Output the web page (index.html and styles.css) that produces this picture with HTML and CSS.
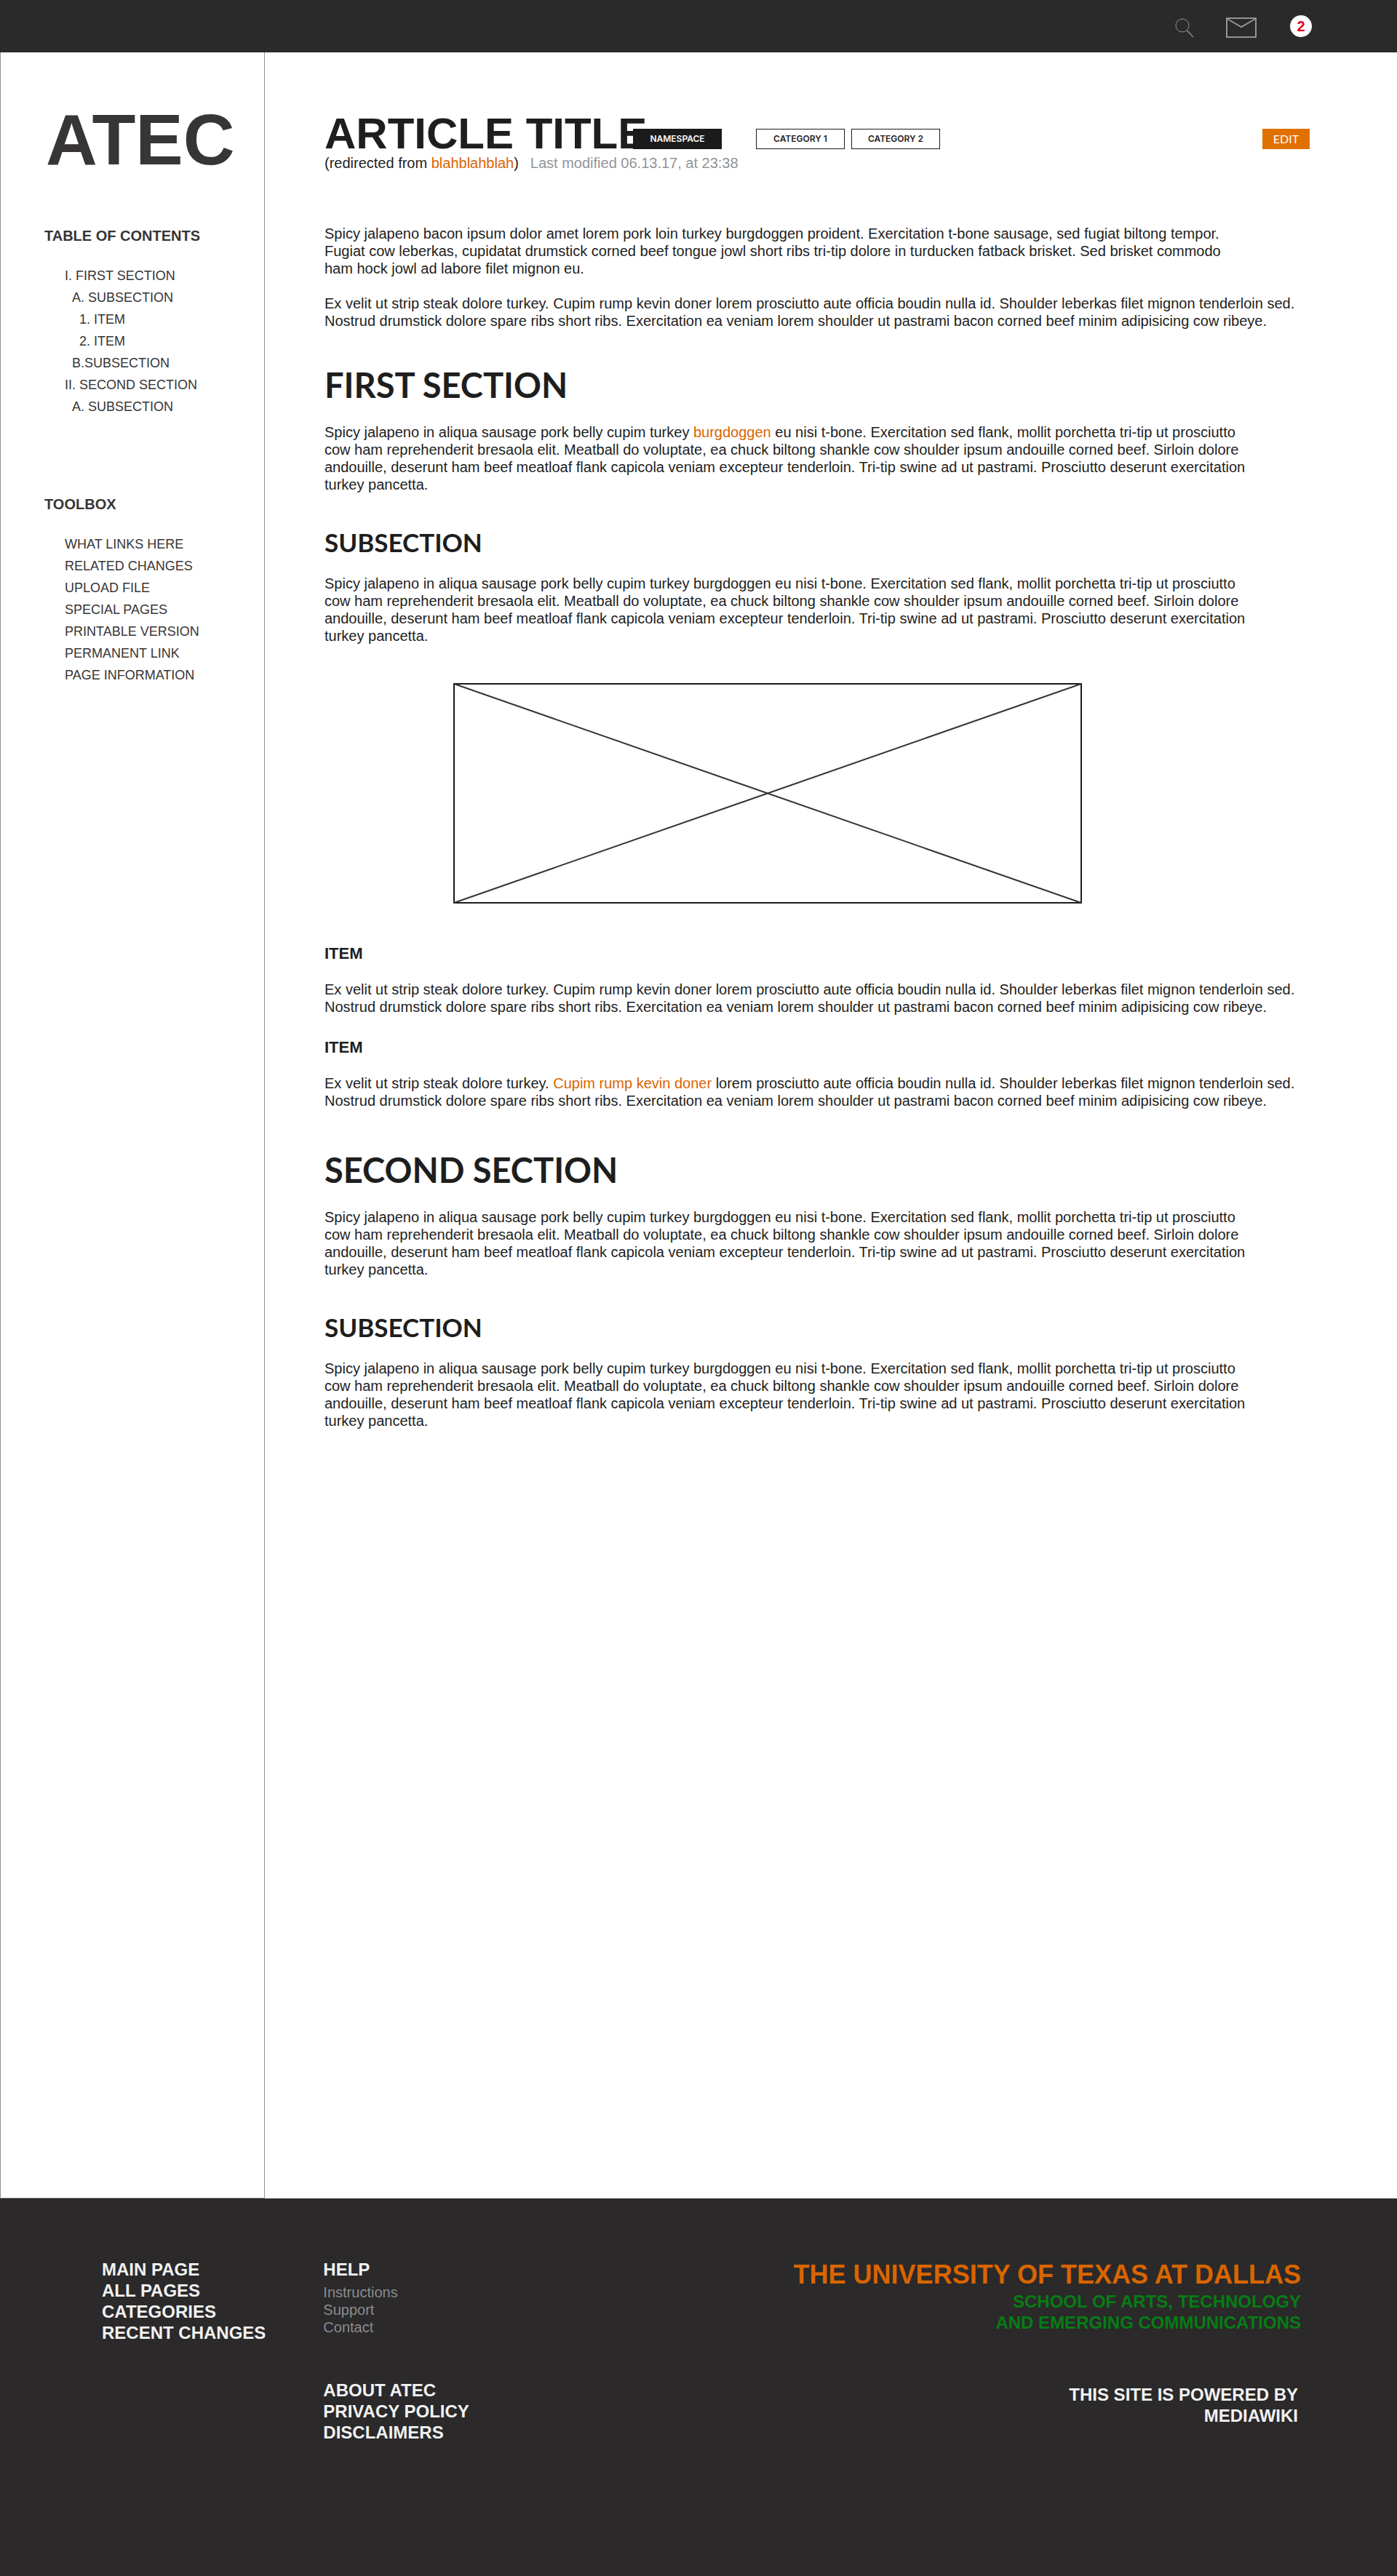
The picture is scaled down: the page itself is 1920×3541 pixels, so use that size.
FILE: index.html
```html
<!DOCTYPE html>
<html lang="en">
<head>
<meta charset="utf-8">
<title>Article Title - ATEC</title>
<meta name="viewport" content="width=device-width, initial-scale=1">
<link rel="stylesheet" href="styles.css">
</head>
<body>
<header class="topbar">
  <button class="icon-button" type="button" aria-label="Search">
    <svg class="icon-search" width="26" height="27" viewBox="0 0 26 27" fill="none" stroke="#8f9194" stroke-width="1"><circle cx="10" cy="10" r="9"/><path d="M16 16.500 25 26" stroke-width="1.400"/></svg>
  </button>
  <a class="icon-link" href="#" aria-label="Messages">
    <svg width="42" height="28" viewBox="0 0 42 28" fill="none" stroke="#929497" stroke-width="2"><path d="M1 1h40v26H1z"/><path d="M1 1.500 21 13 41 1.500"/></svg>
  </a>
  <a class="count" href="#">2</a>
</header>

<div class="page">
  <aside class="sidebar">
    <a class="logo" href="#">ATEC</a>
    <nav class="menu">
      <h2 class="menu-title">TABLE OF CONTENTS</h2>
      <ul class="menu-list">
        <li><a href="#first">I. FIRST SECTION</a></li>
        <li class="level-2"><a href="#first-sub">A. SUBSECTION</a></li>
        <li class="level-3"><a href="#item-1">1. ITEM</a></li>
        <li class="level-3"><a href="#item-2">2. ITEM</a></li>
        <li class="level-2"><a href="#first-sub">B.SUBSECTION</a></li>
        <li><a href="#second">II. SECOND SECTION</a></li>
        <li class="level-2"><a href="#second-sub">A. SUBSECTION</a></li>
      </ul>
    </nav>
    <nav class="menu toolbox">
      <h2 class="menu-title">TOOLBOX</h2>
      <ul class="menu-list">
        <li><a href="#">WHAT LINKS HERE</a></li>
        <li><a href="#">RELATED CHANGES</a></li>
        <li><a href="#">UPLOAD FILE</a></li>
        <li><a href="#">SPECIAL PAGES</a></li>
        <li><a href="#">PRINTABLE VERSION</a></li>
        <li><a href="#">PERMANENT LINK</a></li>
        <li><a href="#">PAGE INFORMATION</a></li>
      </ul>
    </nav>
  </aside>

  <main class="article">
    <div class="title-row">
      <h1 class="title">ARTICLE TITLE</h1>
      <a class="tag tag-namespace" href="#">NAMESPACE</a>
      <a class="tag" href="#">CATEGORY 1</a>
      <a class="tag" href="#">CATEGORY 2</a>
      <button class="edit" type="button">EDIT</button>
    </div>
    <div class="meta">
      <span>(redirected from <a href="#">blahblahblah</a>)</span>
      <span class="modified">Last modified 06.13.17, at 23:38</span>
    </div>

    <section class="intro">
      <p>Spicy jalapeno bacon ipsum dolor amet lorem pork loin turkey burgdoggen proident. Exercitation t-bone sausage, sed fugiat biltong tempor. Fugiat cow leberkas, cupidatat drumstick corned beef tongue jowl short ribs tri-tip dolore in turducken fatback brisket. Sed brisket commodo ham hock jowl ad labore filet mignon eu.</p>
      <p class="wide">Ex velit ut strip steak dolore turkey. Cupim rump kevin doner lorem prosciutto aute officia boudin nulla id. Shoulder leberkas filet mignon tenderloin sed. Nostrud drumstick dolore spare ribs short ribs. Exercitation ea veniam lorem shoulder ut pastrami bacon corned beef minim adipisicing cow ribeye.</p>
    </section>

    <section class="section">
      <h2 id="first">FIRST SECTION</h2>
      <p>Spicy jalapeno in aliqua sausage pork belly cupim turkey <a href="#">burgdoggen</a> eu nisi t-bone. Exercitation sed flank, mollit porchetta tri-tip ut prosciutto cow ham reprehenderit bresaola elit. Meatball do voluptate, ea chuck biltong shankle cow shoulder ipsum andouille corned beef. Sirloin dolore andouille, deserunt ham beef meatloaf flank capicola veniam excepteur tenderloin. Tri-tip swine ad ut pastrami. Prosciutto deserunt exercitation turkey pancetta.</p>
      <h3 id="first-sub">SUBSECTION</h3>
      <p>Spicy jalapeno in aliqua sausage pork belly cupim turkey burgdoggen eu nisi t-bone. Exercitation sed flank, mollit porchetta tri-tip ut prosciutto cow ham reprehenderit bresaola elit. Meatball do voluptate, ea chuck biltong shankle cow shoulder ipsum andouille corned beef. Sirloin dolore andouille, deserunt ham beef meatloaf flank capicola veniam excepteur tenderloin. Tri-tip swine ad ut pastrami. Prosciutto deserunt exercitation turkey pancetta.</p>
      <figure class="figure">
        <svg class="placeholder" viewBox="0 0 864 303" fill="none" role="img" aria-label="Image placeholder"><path d="M1 1h862v301H1z" stroke="#1b1b1b" stroke-width="2"/><path d="M1 1 863 302M1 302 863 1" stroke="#373536" stroke-width="2"/></svg>
      </figure>
      <h4 id="item-1">ITEM</h4>
      <p class="wide">Ex velit ut strip steak dolore turkey. Cupim rump kevin doner lorem prosciutto aute officia boudin nulla id. Shoulder leberkas filet mignon tenderloin sed. Nostrud drumstick dolore spare ribs short ribs. Exercitation ea veniam lorem shoulder ut pastrami bacon corned beef minim adipisicing cow ribeye.</p>
      <h4 id="item-2">ITEM</h4>
      <p class="wide">Ex velit ut strip steak dolore turkey. <a href="#">Cupim rump kevin doner</a> lorem prosciutto aute officia boudin nulla id. Shoulder leberkas filet mignon tenderloin sed. Nostrud drumstick dolore spare ribs short ribs. Exercitation ea veniam lorem shoulder ut pastrami bacon corned beef minim adipisicing cow ribeye.</p>
    </section>

    <section class="section">
      <h2 id="second">SECOND SECTION</h2>
      <p>Spicy jalapeno in aliqua sausage pork belly cupim turkey burgdoggen eu nisi t-bone. Exercitation sed flank, mollit porchetta tri-tip ut prosciutto cow ham reprehenderit bresaola elit. Meatball do voluptate, ea chuck biltong shankle cow shoulder ipsum andouille corned beef. Sirloin dolore andouille, deserunt ham beef meatloaf flank capicola veniam excepteur tenderloin. Tri-tip swine ad ut pastrami. Prosciutto deserunt exercitation turkey pancetta.</p>
      <h3 id="second-sub">SUBSECTION</h3>
      <p>Spicy jalapeno in aliqua sausage pork belly cupim turkey burgdoggen eu nisi t-bone. Exercitation sed flank, mollit porchetta tri-tip ut prosciutto cow ham reprehenderit bresaola elit. Meatball do voluptate, ea chuck biltong shankle cow shoulder ipsum andouille corned beef. Sirloin dolore andouille, deserunt ham beef meatloaf flank capicola veniam excepteur tenderloin. Tri-tip swine ad ut pastrami. Prosciutto deserunt exercitation turkey pancetta.</p>
    </section>
  </main>
</div>

<footer class="footer">
  <ul class="footer-links">
    <li><a href="#">MAIN PAGE</a></li>
    <li><a href="#">ALL PAGES</a></li>
    <li><a href="#">CATEGORIES</a></li>
    <li><a href="#">RECENT CHANGES</a></li>
  </ul>
  <div class="footer-middle">
    <ul class="footer-links">
      <li><a href="#">HELP</a>
        <ul class="help-links">
          <li><a href="#">Instructions</a></li>
          <li><a href="#">Support</a></li>
          <li><a href="#">Contact</a></li>
        </ul>
      </li>
    </ul>
    <ul class="footer-links">
      <li><a href="#">ABOUT ATEC</a></li>
      <li><a href="#">PRIVACY POLICY</a></li>
      <li><a href="#">DISCLAIMERS</a></li>
    </ul>
  </div>
  <div class="credits">
    <p class="university">THE UNIVERSITY OF TEXAS AT DALLAS</p>
    <p class="school">SCHOOL OF ARTS, TECHNOLOGY<br>AND EMERGING COMMUNICATIONS</p>
    <p class="powered">THIS SITE IS POWERED BY<br>MEDIAWIKI</p>
  </div>
</footer>
</body>
</html>
```

FILE: styles.css
```css
* {
  box-sizing: border-box;
}

body {
  margin: 0;
  min-height: 100vh;
  display: flex;
  flex-direction: column;
  background: #fff;
  color: #1e1e1e;
  font: 20px/24px "Liberation Sans", Arial, sans-serif;
}

h1, h2, h3, h4, p, ul, figure {
  margin: 0;
}

ul {
  padding: 0;
  list-style: none;
}

a {
  color: inherit;
  text-decoration: none;
}

button {
  border: 0;
  padding: 0;
  background: none;
  font: inherit;
  cursor: pointer;
}

svg {
  display: block;
}

/* Top bar */

.topbar {
  display: flex;
  justify-content: flex-end;
  align-items: center;
  height: 72px;
  padding-right: 117px;
  background: #2a2a2a;
}

.icon-button {
  margin-right: 44px;
  padding-top: 5px;
}

.icon-link {
  margin-right: 46px;
  padding-top: 4px;
}

.count {
  width: 30px;
  height: 30px;
  border-radius: 50%;
  background: #fff;
  color: #e9001b;
  font-weight: bold;
  line-height: 30px;
  text-align: center;
}

/* Page */

.page {
  flex: 1;
  display: flex;
}

.sidebar {
  flex: 0 0 364px;
  padding: 80px 20px 60px 60px;
  border: 1px solid #929497;
  border-top: 0;
  color: #373536;
}

.logo {
  display: block;
  padding-left: 2px;
  font-size: 98px;
  font-weight: bold;
  line-height: 80px;
}

.menu {
  padding-top: 80px;
}

.menu-title {
  font-size: 20px;
  line-height: 24px;
}

.menu-list {
  padding: 28px 0 0 28px;
  font-size: 18px;
  line-height: 30px;
}

.menu-list .level-2 {
  padding-left: 10px;
}

.menu-list .level-3 {
  padding-left: 20px;
}

.toolbox {
  padding-top: 107px;
}

/* Article */

.article {
  flex: 1;
  min-width: 0;
  padding: 84px 120px 60px 82px;
}

.article p {
  max-width: 1272px;
}

.article .wide {
  max-width: 1340px;
}

.article p a,
.meta a {
  color: #d96500;
}

.title-row {
  display: flex;
  align-items: flex-start;
}

/* The namespace tag overlaps the end of the title */
.title {
  flex: 0 0 424px;
  min-width: 0;
  width: 424px;
  font-size: 60px;
  line-height: 56px;
  white-space: nowrap;
}

.tag {
  width: 122px;
  height: 28px;
  margin: 21px 9px 0 0;
  border: 1px solid #1b1b1b;
  font: 600 12px/26px Inter, sans-serif;
  text-align: center;
}

.tag-namespace {
  margin-right: 47px;
  background: #1b1b1b;
  color: #fff;
}

.edit {
  width: 65px;
  height: 28px;
  margin: 21px 0 0 auto;
  background: #e07000;
  color: #fff;
  font: 16px/28px Lato, sans-serif;
}

.meta {
  display: flex;
  gap: 16px;
}

.modified {
  color: #929497;
}

.intro {
  display: grid;
  gap: 24px;
  padding-top: 73px;
}

.section {
  padding-bottom: 7px;
}

.section h2 {
  padding: 48px 0 25px;
  font: bold 47px/56px Lato, sans-serif;
}

.section h3 {
  padding: 47px 0 25px;
  font: bold 35px/40px Lato, sans-serif;
}

.section h4 {
  padding: 31px 0 24px;
  font-size: 22px;
  line-height: 26px;
}

.figure {
  max-width: 1041px;
  padding: 53px 0 25px 177px;
}

/* Footer */

.footer {
  display: flex;
  padding: 83px 132px 183px 140px;
  background: #2b292a;
}

.footer-links {
  color: #f1f2f2;
  font-size: 24px;
  font-weight: bold;
  line-height: 29px;
}

.footer-links + .footer-links {
  padding-top: 60px;
}

.footer-middle {
  margin-left: 79px;
}

.help-links {
  padding-top: 5px;
  color: #8a8c8e;
  font-size: 20px;
  font-weight: normal;
  line-height: 24px;
}

.credits {
  margin-left: auto;
  font-weight: bold;
  text-align: right;
}

.university {
  color: #d96500;
  font-size: 36px;
  line-height: 44px;
}

.school {
  color: #067d14;
  font-size: 24px;
  line-height: 29px;
}

.powered {
  padding: 70px 4px 0 0;
  color: #f1f2f2;
  font-size: 24px;
  line-height: 29px;
}
```
